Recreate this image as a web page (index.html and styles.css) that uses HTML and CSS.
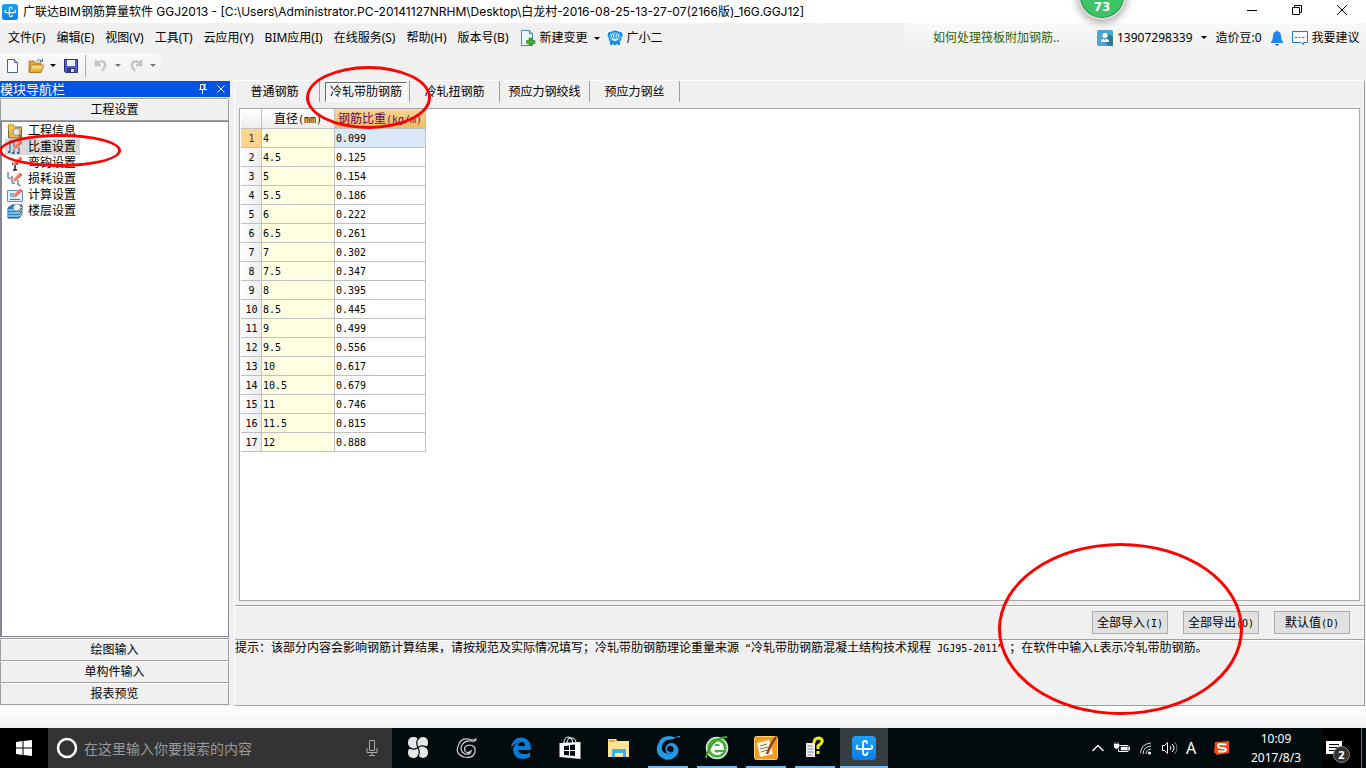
FILE: index.html
```html
<!DOCTYPE html>
<html lang="zh-CN">
<head>
<meta charset="utf-8">
<title>广联达BIM钢筋算量软件 GGJ2013</title>
<link rel="stylesheet" href="styles.css">
</head>
<body>
<svg class="defs" aria-hidden="true">
  <defs>
    <linearGradient id="blue" x1="0" y1="0" x2="0" y2="1"><stop offset="0" stop-color="#1ba2fb"/><stop offset="1" stop-color="#0b7de8"/></linearGradient>
    <linearGradient id="gold" x1="0" y1="0" x2="0" y2="1"><stop offset="0" stop-color="#fff0a0"/><stop offset="1" stop-color="#dc9a20"/></linearGradient>
    <symbol id="logo" viewBox="0 0 24 24">
      <rect width="24" height="24" rx="4" fill="url(#blue)"/>
      <path d="M15 7q0-2-2-2t-2 2v9.500q0 2.500 2.200 2.500t2.300-2.500M5.500 9.500Q3 13 6.500 13H18q3.500 0 1.500-3.500" fill="none" stroke="#fff" stroke-width="1.800" stroke-linecap="round"/>
    </symbol>
    <symbol id="pencil" viewBox="0 0 16 16">
      <path d="M5.500 11l1-3L13 1.500l2.500 2.200L8.500 10z" fill="#e4573d"/><path d="M7 8l6-6 1 .8-6 6.200z" fill="#f79a80"/><path d="M5.500 11l1-3 2 2z" fill="#f0c9a0"/>
    </symbol>
  </defs>
</svg>
<div class="screen">
  <header class="titlebar">
    <svg class="i16" viewBox="0 0 24 24"><use href="#logo"/></svg>
    <h1 class="title">广联达BIM钢筋算量软件 GGJ2013 - [C:\Users\Administrator.PC-20141127NRHM\Desktop\白龙村-2016-08-25-13-27-07(2166版)_16G.GGJ12]</h1>
    <div class="window-buttons">
      <button aria-label="最小化"><svg viewBox="0 0 12 12"><path d="M1 6.500h10" stroke="#000" fill="none"/></svg></button>
      <button aria-label="还原"><svg viewBox="0 0 12 12"><path d="M1.500 3.500h7v7h-7zM3.500 3.500v-2h7v7h-2" stroke="#000" fill="none"/></svg></button>
      <button aria-label="关闭"><svg viewBox="0 0 12 12"><path d="M1 1l10 10M11 1L1 11" stroke="#000" fill="none"/></svg></button>
    </div>
    <div class="ball">73</div>
  </header>

  <nav class="menubar">
    <div class="menus">
      <button>文件(F)</button><button>编辑(E)</button><button>视图(V)</button><button>工具(T)</button><button>云应用(Y)</button><button>BIM应用(I)</button><button>在线服务(S)</button><button>帮助(H)</button><button>版本号(B)</button>
      <div class="menu-extra">
        <button class="with-icon change"><svg class="i16" viewBox="0 0 16 16"><path d="M1.500 .5h8l3 3v12h-11z" fill="#eaf6fd" stroke="#3c86bb"/><path d="M9.500 .5v3h3" fill="#a9d7f3" stroke="#3c86bb"/><path d="M9 8h3v2.500h3v3h-3V16H9v-2.500H6.500v-3H9z" fill="#45ad20" stroke="#2c8410" stroke-width=".6"/></svg>新建变更<i class="caret"></i></button>
        <button class="with-icon"><svg class="i16" viewBox="0 0 16 16"><path d="M1 3.500Q1 1.500 3.500 2 8-1 12.500 2 15 1.500 15.500 4 16 6 14.500 7q0 3-1.500 4.500V15h-2.500v-1.500L8 15.500 5.500 13.500V15H3v-3.500Q1.500 10 1.500 7 0 6 1 3.500z" fill="#1489dd"/><path d="M3 3.500q5-3 10 0 2 4-1 7-4 2-8 0-3-3-1-7z" fill="#48b5f5"/><circle cx="5.500" cy="5.500" r="1.500" fill="#fff"/><circle cx="10.500" cy="5.500" r="1.500" fill="#fff"/><path d="M5.500 5v1.500M10.500 5v1.500" stroke="#154875"/><path d="M5 8.500q3 3 6 0" stroke="#fff" fill="none" stroke-width="1.200"/></svg>广小二</button>
      </div>
    </div>
    <a class="notice" href="#">如何处理筏板附加钢筋..</a>
    <div class="account">
      <button class="with-icon user"><svg class="i16" viewBox="0 0 16 16"><rect width="16" height="16" rx="2" fill="#4ba5d7"/><path d="M8 12l4 4h4V7l-4-3z" fill="#32759d"/><circle cx="8" cy="5.500" r="2.500" fill="#fff"/><path d="M4 12q0-3 2.500-3L8 10l1.500-1q2.500 0 2.500 3z" fill="#fff"/></svg>13907298339<i class="caret"></i></button>
      <button class="beans">造价豆:0</button>
      <button class="bell" aria-label="通知"><svg viewBox="0 0 12 16"><path d="M6 0l1 1.500q3 .7 3 4.500 0 4 2 6v1H0v-1q2-2 2-6 0-3.800 3-4.500z" fill="#1e86f5"/><path d="M4 14h4l-2 2z" fill="#175a9e"/></svg></button>
      <button class="with-icon"><svg class="i16" viewBox="0 0 16 16"><path d="M.5 1.500h15v11h-4v2l-3-2h-8z" fill="#f7fbff" stroke="#2476c9"/><path d="M3 7.500h2m1.500 0h2m1.500 0h2.500" stroke="#2476c9"/></svg>我要建议</button>
    </div>
  </nav>

  <div class="toolbar">
    <button aria-label="新建"><svg class="i16" viewBox="0 0 16 16"><path d="M2.500 1.500h7l3 3v10h-10z" fill="#fafcff" stroke="#47658d"/><path d="M9.500 1.500v3h3" fill="#c8d8eb" stroke="#47658d"/></svg></button>
    <button class="open" aria-label="打开"><svg class="i16" viewBox="0 0 16 16"><path d="M1 14V3h5l1 2h6v9z" fill="#e1aa42" stroke="#a66f17" stroke-width=".8"/><path d="M1 14.500L3.500 7H16l-3 7.500z" fill="url(#gold)" stroke="#a66f17" stroke-width=".8"/><path d="M8.500 3q3-3 5.500 0m.5-2.500V3.500h-3" fill="none" stroke="#4c779e"/></svg><i class="caret"></i></button>
    <button class="save" aria-label="保存"><svg class="i16" viewBox="0 0 16 16"><path d="M1.500 1.500h13v13h-12l-1-1z" fill="#5260cc" stroke="#262d86"/><path d="M4 2h8v6H4z" fill="#edf1fa"/><path d="M4 10h8v5H4z" fill="#303772"/><path d="M8 11h3v3H8z" fill="#d7ddec"/></svg></button>
    <button disabled aria-label="撤销"><svg class="i16" viewBox="0 0 16 16"><path d="M3 2v5h5M4 6q3-4 7-2 3 3-2 9" fill="none" stroke="#c3c5c7" stroke-width="2.500"/></svg><i class="caret"></i></button>
    <button disabled aria-label="恢复"><svg class="i16" viewBox="0 0 16 16"><path d="M13 2v5H8M12 6Q9 2 5 4q-3 3 2 9" fill="none" stroke="#c3c5c7" stroke-width="2.500"/></svg><i class="caret"></i></button>
  </div>

  <main class="workspace">
    <aside class="sidebar">
      <div class="side-title"><h2>模块导航栏</h2>
        <button aria-label="固定"><svg viewBox="0 0 10 10"><path d="M2 .5h5.500M2.500.5v5M6 .5v5M7 .5v5M1 5.500h8M4.500 6v4" stroke="#fff" fill="none"/></svg></button>
        <button aria-label="关闭导航"><svg viewBox="0 0 10 10"><path d="M1.500 1.500l7 7m0-7l-7 7" stroke="#fff" fill="none"/></svg></button>
      </div>
      <button class="section">工程设置</button>
      <ul class="tree">
        <li><a href="#"><svg class="i16" viewBox="0 0 16 16"><path d="M1.500 4V2h5l1 2h7v11h-13z" fill="#e8b748" stroke="#7c6540"/><path d="M4 0v8M0 4h8M1 1l6 6M7 1L1 7" stroke="#f8cf30"/><circle cx="9.500" cy="9" r="3.500" fill="#dcecf8" stroke="#7d91a0"/><path d="M12 12l3 3" stroke="#9b5b36" stroke-width="2"/></svg><span>工程信息</span></a></li>
        <li><a href="#" class="current"><svg class="i16" viewBox="0 0 16 16"><path d="M3 2v10M7 3v10M3 2h3M12 8v5" stroke="#557bab" fill="none" stroke-width="1.500"/><path d="M1 13h2.500M5 14h2.500M10 14h2.500" stroke="#405f91" stroke-width="2"/><use href="#pencil"/></svg><span>比重设置</span></a></li>
        <li><a href="#"><svg class="i16" viewBox="0 0 16 16"><path d="M5 9h6M8 9v6M6 15h4" stroke="#222" stroke-width="1.500" fill="none"/><use href="#pencil"/></svg><span>弯钩设置</span></a></li>
        <li><a href="#"><svg class="i16" viewBox="0 0 16 16"><path d="M1 1v5q0 2 3 1M5 5v6q0 2 3 1M11 9v4q0 2 3 1" stroke="#5d7395" fill="none" stroke-width="1.300"/><use href="#pencil"/></svg><span>损耗设置</span></a></li>
        <li><a href="#"><svg class="i16" viewBox="0 0 16 16"><path d="M.5 3.500h15v11H.5z" fill="#dcedfc" stroke="#5d8fc2"/><path d="M3 7h4M3 9h3M3 12.500h10" stroke="#3e79b6"/><use href="#pencil"/></svg><span>计算设置</span></a></li>
        <li><a href="#"><svg class="i16" viewBox="0 0 16 16"><path d="M1 5l4-3h10v9l-3 4H1z" fill="#2687c7" stroke="#155b91"/><path d="M1 7h11l3-3M1 10h11l3-3M1 13h11l3-3" fill="none" stroke="#d4efff"/><circle cx="10" cy="4.500" r="3.500" fill="#eef6fc" stroke="#8faabd"/><path d="M12.500 7L15 10" stroke="#bd713a" stroke-width="1.500"/></svg><span>楼层设置</span></a></li>
      </ul>
      <button class="section">绘图输入</button><button class="section">单构件输入</button><button class="section">报表预览</button>
      <div class="mark mark-nav"></div>
    </aside>

    <section class="panel">
      <div class="tabs" role="tablist">
        <button role="tab">普通钢筋</button><button role="tab" aria-selected="true"><span>冷轧带肋钢筋</span></button><button role="tab">冷轧扭钢筋</button><button role="tab">预应力钢绞线</button><button role="tab">预应力钢丝</button>
      </div>
      <div class="sheet">
        <table>
          <thead><tr><th class="num"></th><th class="dia">直径<span class="m">(mm)</span></th><th class="wt">钢筋比重<span class="m">(kg/m)</span></th></tr></thead>
          <tbody>
            <tr class="active"><th>1</th><td>4</td><td>0.099</td></tr>
            <tr><th>2</th><td>4.5</td><td>0.125</td></tr>
            <tr><th>3</th><td>5</td><td>0.154</td></tr>
            <tr><th>4</th><td>5.5</td><td>0.186</td></tr>
            <tr><th>5</th><td>6</td><td>0.222</td></tr>
            <tr><th>6</th><td>6.5</td><td>0.261</td></tr>
            <tr><th>7</th><td>7</td><td>0.302</td></tr>
            <tr><th>8</th><td>7.5</td><td>0.347</td></tr>
            <tr><th>9</th><td>8</td><td>0.395</td></tr>
            <tr><th>10</th><td>8.5</td><td>0.445</td></tr>
            <tr><th>11</th><td>9</td><td>0.499</td></tr>
            <tr><th>12</th><td>9.5</td><td>0.556</td></tr>
            <tr><th>13</th><td>10</td><td>0.617</td></tr>
            <tr><th>14</th><td>10.5</td><td>0.679</td></tr>
            <tr><th>15</th><td>11</td><td>0.746</td></tr>
            <tr><th>16</th><td>11.5</td><td>0.815</td></tr>
            <tr><th>17</th><td>12</td><td>0.888</td></tr>
          </tbody>
        </table>
      </div>
      <div class="actions">
        <button>全部导入<span class="m">(I)</span></button><button>全部导出<span class="m">(O)</span></button><button>默认值<span class="m">(D)</span></button>
      </div>
      <p class="hint">提示：该部分内容会影响钢筋计算结果，请按规范及实际情况填写；冷轧带肋钢筋理论重量来源<span class="m"> “</span>冷轧带肋钢筋混凝土结构技术规程<span class="m"> JGJ95-2011” </span>；在软件中输入<span class="m">L</span>表示冷轧带肋钢筋。</p>
      <div class="mark mark-tab"></div>
      <div class="mark mark-actions"></div>
    </section>
  </main>

  <div class="statusbar"></div>

  <footer class="taskbar">
    <button class="start" aria-label="开始"><svg class="i16" viewBox="0 0 16 16"><path d="M0 2l6.500-1v6.500H0zM7.500 1L16 0v7.500H7.500zM0 8.500h6.500V15L0 14zM7.500 8.500H16V16l-8.500-1z" fill="#fff"/></svg></button>
    <label class="search"><svg class="i22" viewBox="0 0 22 22"><circle cx="11" cy="11" r="9" fill="none" stroke="#fff" stroke-width="2.500"/></svg><input type="text" placeholder="在这里输入你要搜索的内容" aria-label="搜索"><svg class="i16" viewBox="0 0 16 16"><path d="M5.500.5h5v10h-5zM3 8v4.500h10V8M8 12.500v3M5 15.500h6" fill="none" stroke="#aaa"/></svg></label>
    <div class="apps">
      <button aria-label="四叶"><svg class="i24" viewBox="0 0 24 24"><g fill="#e6e7e7"><rect x="2" y="1" width="11" height="11" rx="5"/><rect x="12" y="1" width="10" height="11" rx="5"/><rect x="2" y="11" width="11" height="11" rx="5"/><rect x="12" y="11" width="10" height="11" rx="5"/><path d="M7 7h10v10H7z"/></g><path d="M2 11q6 4 10 .5M13 1q-4 5-1 10.500M22 12q-6-4-10-.5M11 22q4-5 1-10.500" stroke="#020b0e" fill="none" stroke-width="1.200"/></svg></button>
      <button aria-label="旋风"><svg class="i24" viewBox="0 0 24 24"><path d="M21 3q-3 2-7 0Q6 2 4 8q-5 10 5 13 9 2 11-5 1-7-6-7-6 1-4 6 2 3 6 0-1 4-6 3-6-3-3-9 3-5 9-4 5 1 5-2z" fill="none" stroke="#d4d8d8" stroke-width="1.200"/></svg></button>
      <button class="edge" aria-label="浏览器"><svg class="i24" viewBox="0 0 24 24"><path d="M2 12Q3 2 12 1.500 22 2 22 14H9q1 4 6 4 4 0 6-1.500v4.500q-3 2-7 2-9 0-10-9 0-5 5-7.500Q5 7 2 12zm7-2h7q0-4-3-4-4 0-4 4z" fill="#087bda"/></svg></button>
      <button aria-label="商店"><svg class="i24" viewBox="0 0 24 24"><path d="M6 7Q6 1 11 1q3 0 4 6M9 7q0-5 4-5 5 0 5 5" stroke="#fff" fill="none"/><path d="M1.500 7l21-1v17l-21-2z" fill="#fff"/><path d="M6 10l5-.5V14H6zm6-1l5-.5V14h-5zm-6 6h5v4.500L6 19zm6 0h5v5l-5-.5z" fill="#020b0e"/></svg></button>
      <button aria-label="文件夹"><svg class="i24" viewBox="0 0 24 24"><path d="M1 3h8l1.500 2H22v16H1z" fill="#ffe293"/><path d="M2 4h6v2H2z" fill="#e4ad24"/><path d="M5 13h14v8h-3v-4H8v4H5z" fill="#36b3e8"/></svg></button>
      <button class="running" aria-label="旋风浏览器"><svg class="i24" viewBox="0 0 24 24"><path d="M24 1Q20 2 14 0 5 0 3 6-1 13 2 18q6 8 14 5 8-4 6-11-3-7-10-4-5 4-1 9 2 1 5-1-6 0-5-4 2-4 6-1 2 4-2 6-6 2-9-3-1-7 5-10 10 0 13-8z" fill="#229be9"/></svg></button>
      <button class="running" aria-label="安全浏览器"><svg class="i24" viewBox="0 0 24 24"><circle cx="12" cy="12" r="10.500" fill="#4bad3b" stroke="#d9f1d5" stroke-width="1.500"/><path d="M19 14q0-8-7-9-6 1-7 7 1 7 7 7 4 0 6-3h-4q-4 2-5-2zM9 10q1-3 4-2 2 0 2 2z" fill="#fff"/><path d="M1 22Q6 2 22 1" stroke="#37a425" fill="none" stroke-width="2"/></svg></button>
      <button class="running" aria-label="记事"><svg class="i24" viewBox="0 0 24 24"><rect x=".5" y=".5" width="23" height="23" rx="2" fill="#f29b21" stroke="#ffd174"/><path d="M3 7l12-3 4 14-13 3z" fill="#fff9e8"/><path d="M6 10l7-2M6 13l8-2M7 16l6-2" stroke="#796d55"/><path d="M22 1q-6 8-9 17" stroke="#943f13" stroke-width="2.500" fill="none"/></svg></button>
      <button class="running" aria-label="帮助"><svg class="i24" viewBox="0 0 24 24"><path d="M3 7h9v14H3z" fill="#eee"/><path d="M4.500 10h5m-5 3h6m-6 3h6m-6 3h5" stroke="#888"/><path d="M11 7q0-5 5-5 4 1 3 4-1 2-4 4v3M15 15v3" stroke="#f8ef06" fill="none" stroke-width="3"/></svg></button>
      <button class="running on" aria-label="钢筋算量"><svg class="i24" viewBox="0 0 24 24"><use href="#logo"/></svg></button>
    </div>
    <div class="tray">
      <button aria-label="更多"><svg class="i16" viewBox="0 0 16 16"><path d="M2.500 11L8 5.500l5.500 5.500" fill="none" stroke="#fff" stroke-width="1.300"/></svg></button>
      <button aria-label="电源"><svg class="i16" viewBox="0 0 16 16"><path d="M5.500 5.500H14v6H4.500V9" fill="none" stroke="#fff"/><path d="M7 7h6v3H7zM15 7h1v3h-1zM0 4h5v3L3.500 8.500h-2L0 7zM1 2v2M4 2v2" fill="#fff" stroke="#fff" stroke-width=".5"/></svg></button>
      <button aria-label="网络"><svg class="i16" viewBox="0 0 16 16"><path d="M2.500 13Q3 4 13 3M5 14q0-7 8-8M8 14q0-4 5-5" fill="none" stroke="#ddd"/><circle cx="11.500" cy="13" r="1.500" fill="#fff"/></svg></button>
      <button aria-label="音量"><svg class="i16" viewBox="0 0 16 16"><path d="M.5 5.500h2l3-3v11l-3-3h-2zM8 6q2 2 0 4M10 4q4 4 0 8" fill="none" stroke="#fff"/><path d="M12.500 2q5 6 0 12" fill="none" stroke="#777"/></svg></button>
      <button class="ime">A</button>
      <button aria-label="搜狗输入法"><svg class="i16" viewBox="0 0 16 16"><path d="M1 2l14-1v12L3 15 0 12z" fill="#f04b13"/><path d="M12.500 4.500Q4 3 4 5.500T8 8q4 0 4 2t-8 1.500" fill="none" stroke="#fff" stroke-width="2"/></svg></button>
      <button class="clock"><span>10:09</span><span>2017/8/3</span></button>
      <button class="center" aria-label="操作中心"><svg class="i24" viewBox="0 0 24 24"><path d="M1 2h16v13h-5v4l-4-4H1z" fill="#fff"/><path d="M4 5.500h10M4 8.500h10M4 11.500h7" stroke="#000"/></svg><b>2</b></button>
    </div>
  </footer>
</div>
</body>
</html>
```
FILE: styles.css
```css
* { box-sizing: border-box; }
body { margin: 0; font: 12px/16px "Noto Sans", "Noto Sans CJK SC", sans-serif; color: #000; background: #f0f0f0; }
button { margin: 0; padding: 0; border: 0; background: none; font: inherit; color: inherit; white-space: nowrap; }
a { color: inherit; text-decoration: none; }
h1, h2, p, ul { margin: 0; padding: 0; font: inherit; }
svg { display: block; flex: none; }
.defs { position: absolute; width: 0; height: 0; }
.i16 { width: 16px; height: 16px; }
.i22 { width: 22px; height: 22px; }
.i24 { width: 24px; height: 24px; }
.m { font: 10px/14px "DejaVu Sans Mono", monospace; white-space: pre; }
.caret { display: block; border: 3px solid transparent; border-top-color: currentColor; border-bottom: 0; }

.screen { display: flex; flex-direction: column; min-height: 100vh; overflow: hidden; }

.titlebar { position: relative; display: flex; align-items: center; height: 23px; padding-left: 2px; gap: 5px; background: #fff; }
.title { white-space: nowrap; font-family: Inter, "Noto Sans CJK SC", sans-serif; }
.window-buttons { display: flex; align-self: flex-start; margin-left: auto; padding-right: 2px; }
.window-buttons button { width: 45px; height: 20px; display: flex; align-items: center; justify-content: center; }
.window-buttons svg { width: 12px; height: 12px; }
.ball { position: absolute; z-index: 3; right: 240px; top: -28px; width: 48px; height: 48px; padding-top: 25px; border: 2px solid #d8d8d8; border-radius: 50%; background: #3fc465; box-shadow: inset 0 0 0 1px #28874b, 0 2px 8px #999; color: #fff; font: bold 12px/16px "DejaVu Sans", sans-serif; text-align: center; }

.menubar { display: flex; height: 28px; }
.menus { display: flex; align-items: center; gap: 11px; padding: 2px 0 0 8px; flex: 1; }
.menu-extra { display: flex; gap: 7px; }
.with-icon { display: flex; align-items: center; gap: 4px; }
.change .caret { margin-left: 2px; }
.notice { width: 187px; padding: 7px 0 0 29px; white-space: nowrap; color: #306000; background: linear-gradient(#f9f9f9, #f0f0f0); border-radius: 4px; }
.account { display: flex; align-items: center; width: 275px; padding: 1px 6px 0; background: linear-gradient(#f9f9f9, #f0f0f0); border-radius: 4px; }
.user .caret { margin-left: 4px; }
.beans { margin-left: 9px; }
.bell { margin: 0 9px; }
.bell svg { width: 12px; height: 16px; }

.toolbar { display: flex; align-items: center; align-self: flex-start; height: 25px; margin: 2px 0; padding: 0 5px; gap: 7px; background: linear-gradient(#fafafa, #f0f0f0); border-radius: 4px; }
.toolbar button { display: flex; align-items: center; gap: 6px; }
.toolbar .save { padding: 3px 6px 3px 0; border-right: 1px solid #aaa; }
.toolbar button:disabled { color: #777; }

.workspace { display: flex; flex: 1; gap: 4px; }
.sidebar { position: relative; display: flex; flex-direction: column; width: 230px; padding: 1px 1px 1px 0; }
.side-title { display: flex; align-items: center; height: 16px; margin-right: -1px; padding-right: 4px; gap: 8px; background: #0054e3; color: #fff; }
.side-title h2 { flex: 1; font-size: 13px; }
.side-title svg { width: 10px; height: 10px; }
.section { height: 22px; border: 1px solid #a0a0a0; border-top-color: #fff; box-shadow: 0 -1px #a0a0a0; background: #f0f0f0; }
.side-title + .section { margin: 2px 0 0; }
.tree { flex: 1; list-style: none; margin-bottom: 2px; padding: 1px 3px; border: 2px solid #828790; border-width: 1px 1px 1px 2px; background: #fff; }
.tree a { display: inline-flex; height: 16px; gap: 2px; padding-left: 2px; vertical-align: top; }
.tree li { height: 16px; }
.tree span { padding: 0 4px 0 3px; }
.tree .current { background: #d9d9d9; }

.panel { position: relative; display: flex; flex-direction: column; flex: 1; margin-right: 1px; border: 1px solid #a0a0a0; border-top-color: #fff; border-left-color: #fff; }
.tabs { display: flex; height: 27px; }
.tabs button { width: 90px; height: 21px; border-right: 1px solid #a0a0a0; }
.tabs button:first-child { width: 85px; padding-right: 5px; }
.tabs [aria-selected] { padding: 1px 2px 0 5px; }
.tabs [aria-selected] span { display: block; height: 20px; padding-top: 1px; border: 1px solid #696969; border-right-color: #fff; border-bottom-color: #fff; background: repeating-conic-gradient(#fff 0 25%, #f0f0f0 0 50%) 0 0 / 2px 2px; }
.sheet { flex: 1; margin: 0 4px 4px; padding: 0 1px; border: 1px solid #a6a6ac; background: #fff; }
table { border-collapse: separate; border-spacing: 0; table-layout: fixed; width: 185px; }
th, td { height: 19px; padding: 1px 0 0 1px; border: solid #c0c0c0; border-width: 0 1px 1px 0; font: 10px/14px "DejaVu Sans Mono", monospace; text-align: left; white-space: nowrap; }
thead th { height: 20px; padding: 0; font: 12px/16px "Noto Sans CJK SC", sans-serif; text-align: center; background: linear-gradient(#fff, #ededed); }
.num { width: 21px; }
.dia { width: 73px; }
.wt { width: 91px; color: #5c0b5c; background: linear-gradient(#f8d59b, #f3bd5a); }
tbody th { text-align: center; background: linear-gradient(90deg, #fff, #ededed); }
td:nth-child(2) { background: #ffffe1; }
.active th { background: #ffd58d; color: #5c0b5c; }
.active td:last-child { background: #d9e9f7; }
.actions { display: flex; justify-content: flex-end; height: 34px; padding: 5px 14px 0 0; gap: 15px; border-top: 1px solid #a0a0a0; box-shadow: inset 0 1px #fff; }
.actions button { width: 76px; height: 23px; border: 1px solid #adadad; background: #e1e1e1; }
.hint { height: 66px; border-top: 1px solid #a0a0a0; box-shadow: inset 0 1px #fff; white-space: nowrap; }

.mark { position: absolute; z-index: 2; border: 3px solid #f00; border-radius: 50%; pointer-events: none; }
.mark-nav { left: -1px; top: 54px; width: 122px; height: 33px; }
.mark-tab { left: 71px; top: -15px; width: 125px; height: 63px; }
.mark-actions { right: 121px; bottom: -10px; width: 245px; height: 172px; }

.statusbar { height: 22px; background: linear-gradient(#fff, #f0f0f0); }

.taskbar { display: flex; height: 40px; background: #020b0e; color: #fff; }
.start { display: flex; align-items: center; justify-content: center; width: 48px; background: #000; }
.search { display: flex; align-items: center; width: 344px; padding: 0 12px 0 8px; gap: 6px; background: #333; }
.search input { flex: 1; min-width: 0; padding: 0; border: 0; outline: 0; background: none; color: #fff; font: 14px/20px "Noto Sans CJK SC", sans-serif; }
.search input::placeholder { color: #999; opacity: 1; }
.apps { display: flex; gap: 1px; padding-left: 2px; }
.apps button { display: flex; align-items: center; justify-content: center; width: 48px; }
.apps .edge { margin-left: 5px; }
.running { background: linear-gradient(#76b9ed, #76b9ed) center bottom / 40px 2px no-repeat; }
.running.on { background: linear-gradient(#76b9ed, #76b9ed) center bottom / 48px 2px no-repeat, #353e41; }
.tray { display: flex; align-items: center; margin-left: auto; gap: 8px; padding-right: 4px; }
.ime { width: 20px; font-size: 16px; text-align: left; }
.clock { display: flex; flex-direction: column; width: 76px; line-height: 19px; align-items: center; }
.center { position: relative; width: 40px; height: 40px; padding: 6px 0 0 3px; border-right: 1px solid #666; background: #000; }
.center b { position: absolute; left: 11px; top: 18px; width: 17px; height: 17px; border: 1px solid #888; border-radius: 50%; background: #333; font-size: 11px; line-height: 15px; }
```
